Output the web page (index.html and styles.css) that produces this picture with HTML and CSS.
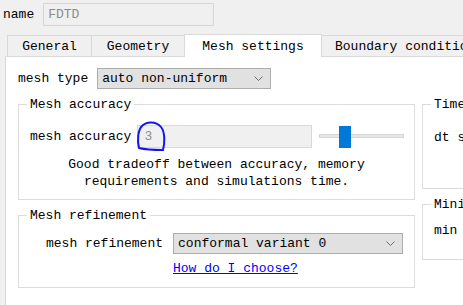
FILE: index.html
```html
<!DOCTYPE html>
<html>
<head>
<meta charset="utf-8">
<link rel="stylesheet" href="styles.css">
</head>
<body>
<div class="name-row">
  <span class="lbl">name</span>
  <div class="name-input">FDTD</div>
</div>
<div class="tabs">
  <div class="tab t-general">General</div>
  <div class="tab t-geometry">Geometry</div>
  <div class="tab t-mesh active">Mesh settings</div>
  <div class="tab t-boundary">Boundary conditions</div>
</div>
<div class="panel">
  <div class="type-row">
    <span class="lbl">mesh type</span>
    <div class="select type-select"><span>auto non-uniform</span>
      <svg class="chev" width="9" height="5" viewBox="0 0 9 5"><path d="M0.5 0.5 L4.5 4.5 L8.5 0.5" fill="none" stroke="#707070" stroke-width="1"/></svg>
    </div>
  </div>
  <div class="groups">
    <div class="col">
      <fieldset class="group g-accuracy">
        <legend>Mesh accuracy</legend>
        <div class="acc-row">
          <span class="lbl">mesh accuracy</span>
          <div class="acc-input">3</div>
          <div class="slider"><div class="track"></div><div class="thumb"></div></div>
        </div>
        <p class="desc">Good tradeoff between accuracy, memory<br>requirements and simulations time.</p>
      </fieldset>
      <fieldset class="group g-refine">
        <legend>Mesh refinement</legend>
        <div class="ref-row">
          <span class="lbl">mesh refinement</span>
          <div class="select ref-select"><span>conformal variant 0</span>
            <svg class="chev" width="9" height="5" viewBox="0 0 9 5"><path d="M0.5 0.5 L4.5 4.5 L8.5 0.5" fill="none" stroke="#707070" stroke-width="1"/></svg>
          </div>
        </div>
        <div class="link-row"><a href="#" class="link">How do I choose?</a></div>
      </fieldset>
    </div>
    <div class="col">
      <fieldset class="group g-time">
        <legend>Time stepping</legend>
        <div class="side-row">dt stability factor</div>
      </fieldset>
      <fieldset class="group g-min">
        <legend>Minimum mesh step</legend>
        <div class="side-row">min mesh step</div>
      </fieldset>
    </div>
  </div>
</div>
<svg class="annot" width="463" height="305" viewBox="0 0 463 305">
  <path d="M142 126 C138 130 137 140 139 148 C147 150 156 150 163 150 C165 142 165 132 161 127 C156 121 146 121 141 127" fill="none" stroke="#1414f0" stroke-width="2" stroke-linecap="round"/>
</svg>
</body>
</html>
```
FILE: styles.css
```css
html, body {
  margin: 0;
  padding: 0;
}
body {
  width: 463px;
  height: 305px;
  overflow: hidden;
  position: relative;
  background: #f0f0f0;
  font-family: "Liberation Mono", "DejaVu Sans Mono", monospace;
  font-size: 13px;
  color: #000;
  line-height: 15px;
}
.lbl {
  white-space: nowrap;
}
.name-row {
  display: flex;
  align-items: center;
  padding: 3px 0 0 3px;
  height: 22px;
}
.name-input {
  margin-left: 9px;
  width: 171px;
  height: 23px;
  box-sizing: border-box;
  border: 1px solid #d6d6d6;
  background: #f0f0f0;
  color: #8c8c8c;
  padding-left: 4px;
  display: flex;
  align-items: center;
}
.tabs {
  display: flex;
  align-items: flex-end;
  margin: 9px 0 0 7px;
  height: 22px;
  white-space: nowrap;
}
.tab {
  box-sizing: border-box;
  height: 21px;
  border: 1px solid #d9d9d9;
  border-bottom: none;
  background: #f0f0f0;
  display: flex;
  align-items: center;
  justify-content: center;
  margin-left: -1px;
  flex: none;
}
.t-general { width: 85px; margin-left: 0; }
.t-geometry { width: 94px; }
.t-mesh { width: 138px; }
.t-boundary { width: 170px; justify-content: flex-start; padding-left: 13px; }
.tab.active {
  background: #fff;
  height: 23px;
  margin-bottom: -1px;
  position: relative;
  z-index: 1;
  padding-top: 1px;
}
.panel {
  margin-left: 5px;
  width: 500px;
  height: 260px;
  background: #fff;
  border: 1px solid #d9d9d9;
  box-sizing: border-box;
  padding: 11px 0 0 12px;
}
.type-row {
  display: flex;
  align-items: center;
  gap: 9px;
}
.select {
  box-sizing: border-box;
  height: 21px;
  background: #e1e1e1;
  border: 1px solid #adadad;
  display: flex;
  align-items: center;
  justify-content: space-between;
  padding: 0 7px 0 4px;
  white-space: nowrap;
}
.type-select { width: 174px; }
.ref-select { width: 230px; }
.chev { flex: none; }
.groups {
  display: flex;
  gap: 7px;
  margin-top: 8px;
}
.col {
  display: flex;
  flex-direction: column;
  gap: 8px;
}
.col:first-child { width: 397px; flex: none; }
.col:last-child { width: 150px; flex: none; }
.group {
  margin: 0;
  padding: 0;
  min-width: 0;
  border: 1px solid #dcdcdc;
}
.group legend {
  padding: 0 3px;
  margin-left: 8px;
  line-height: 15px;
}
.acc-row {
  display: flex;
  align-items: center;
  padding-left: 11px;
  margin-top: 13px;
}
.acc-input {
  margin-left: 6px;
  width: 175px;
  height: 23px;
  box-sizing: border-box;
  border: 1px solid #d9d9d9;
  background: #f0f0f0;
  color: #8c8c8c;
  padding-left: 6px;
  display: flex;
  align-items: center;
}
.slider {
  position: relative;
  margin-left: 7px;
  width: 85px;
  height: 22px;
}
.track {
  position: absolute;
  left: 0;
  right: 0;
  top: 8px;
  height: 4px;
  box-sizing: border-box;
  background: #e7e7e7;
  border: 1px solid #d6d6d6;
}
.thumb {
  position: absolute;
  left: 20px;
  top: 0;
  width: 12px;
  height: 22px;
  background: #0078d7;
}
.desc {
  margin: 8px 0 9px;
  text-align: center;
  line-height: 17px;
  white-space: nowrap;
}
.ref-row {
  display: flex;
  align-items: center;
  gap: 10px;
  padding-left: 27px;
  margin-top: 10px;
}
.link-row {
  padding-left: 154px;
  margin: 7px 0 11px;
}
.link {
  color: #0000ff;
  text-decoration: underline;
}
.side-row {
  padding-left: 11px;
  margin: 18px 0 0;
  white-space: nowrap;
}
.g-time { height: 92px; box-sizing: border-box; }
.g-min { height: 63px; box-sizing: border-box; }
.g-min .side-row { margin-top: 11px; }
.annot {
  position: absolute;
  left: 0;
  top: 0;
  pointer-events: none;
}
```
